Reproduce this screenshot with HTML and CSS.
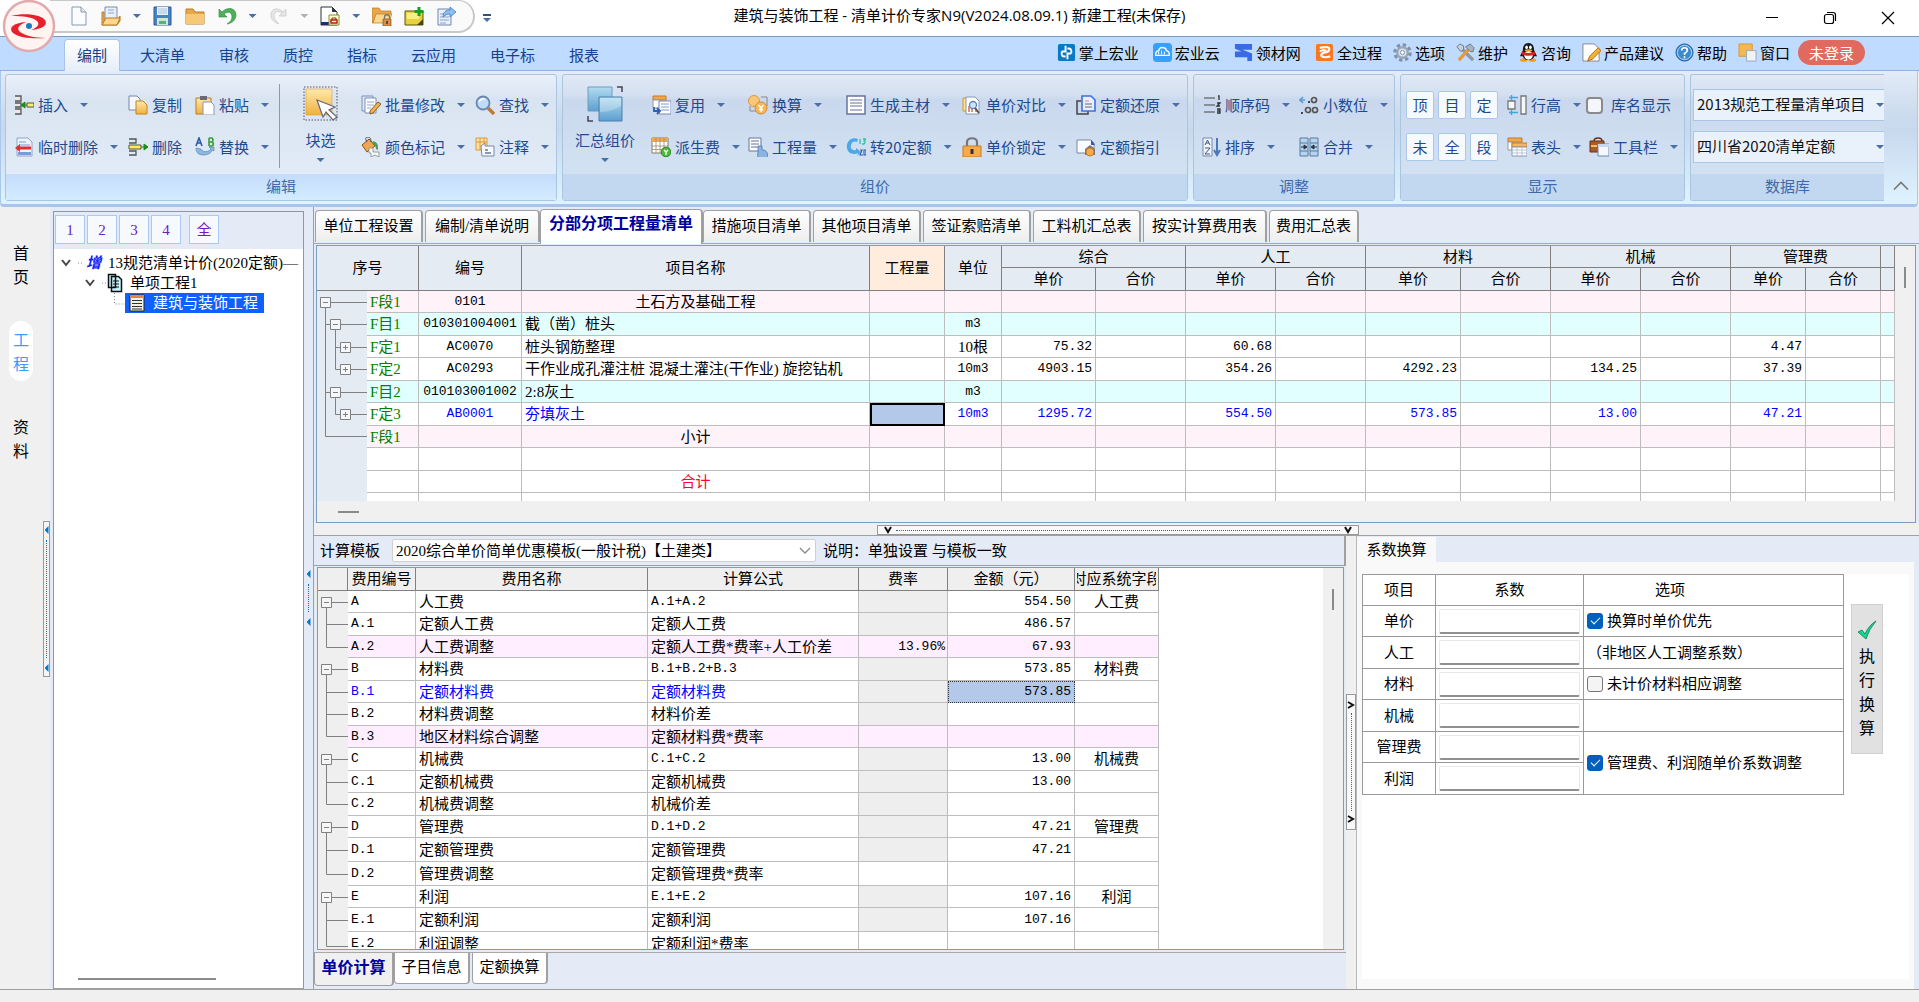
FILE: index.html
```html
<!DOCTYPE html>
<html lang="zh-CN">
<head>
<meta charset="utf-8">
<title>建筑与装饰工程 - 清单计价专家N9</title>
<link rel="stylesheet" href="styles.css">
</head>
<body>
<svg class="sprite" aria-hidden="true">
  <defs>
    <linearGradient id="gold" x1="0" y1="0" x2="0" y2="1"><stop offset="0" stop-color="#ffe9a8"/><stop offset="1" stop-color="#f0b040"/></linearGradient>
    <linearGradient id="blue" x1="0" y1="0" x2="0" y2="1"><stop offset="0" stop-color="#b4dcf0"/><stop offset="1" stop-color="#5b9fd0"/></linearGradient>
  </defs>
  <symbol id="i-new" viewBox="0 0 20 20"><path d="M3 1h9l5 5v13H3z" fill="#fafcff" stroke="#8a98b0"/><path d="M12 1v5h5" fill="#dfe8f5" stroke="#8a98b0"/></symbol>
  <symbol id="i-open" viewBox="0 0 20 20"><path d="M4 1h12v13H4z" fill="#e8f0fb" stroke="#7a8cae"/><path d="M7 4h6M7 7h6" stroke="#8fa4c8"/><path d="M1 6h2v9h13l3-5v5l-3 4H1z" fill="#f0b85a" stroke="#b87a28"/><path d="M1 19l4-7h14l-3 7z" fill="#ffd78a" stroke="#b87a28"/></symbol>
  <symbol id="i-save" viewBox="0 0 20 20"><path d="M1 1h17v18H1z" fill="#4a82c4" stroke="#2b5a96"/><path d="M4 1h11v8H4z" fill="#eaf2fb"/><path d="M5 3h9M5 5h9M5 7h9" stroke="#a9c2e0"/><path d="M4 12h11v7H4z" fill="#cfe6d0"/><path d="M6 15h7v3H6z" fill="#57b85c"/></symbol>
  <symbol id="i-folder" viewBox="0 0 20 20"><path d="M1 3h7l2 3h9v12H1z" fill="#e8a84a" stroke="#b87a28"/><path d="M1 8h18v10H1z" fill="#f6c878"/></symbol>
  <symbol id="i-undo" viewBox="0 0 20 20"><path d="M2 3v8h8L7 8c4-3 8-2 8 3 0 3-2 5-5 7 6-1 9-5 9-9 0-7-8-9-14-3z" fill="#4faf5a" stroke="#2d8a3c" stroke-width=".6"/></symbol>
  <symbol id="i-redo" viewBox="0 0 20 20"><path d="M18 3v7h-7l3-3c-4-3-8-1-8 3 0 3 2 5 5 8-6-2-8-5-8-9 0-7 7-8 12-3z" fill="#e6e6e6" stroke="#c4c4c4" stroke-width=".7"/></symbol>
  <symbol id="i-doclock" viewBox="0 0 20 20"><path d="M1 1h11l5 5v13H1z" fill="#fff" stroke="#333"/><path d="M12 1v5h5z" fill="#334"/><path d="M1 16h8v3H1z" fill="#1b2f7a"/><path d="M9 9h10v10H9z" fill="#ffffc8" stroke="#8a8a30"/><path d="M11 14h6v3h-6z" fill="none" stroke="#b01818" stroke-width="1.4"/><path d="M12 14v-2h4v2" fill="none" stroke="#b01818"/></symbol>
  <symbol id="i-folderlock" viewBox="0 0 20 20"><path d="M0 2h7l2 3h10v4H4L1 17H0z" fill="#e8a84a" stroke="#b87a28" stroke-width=".7"/><path d="M4 8h16l-4 9H1z" fill="#ffd78a" stroke="#b87a28" stroke-width=".7"/><path d="M11 13h8v7h-8z" fill="#d89048" stroke="#80501c" stroke-width=".7"/><path d="M12.500 13v-2c0-3 5-3 5 0v2" fill="none" stroke="#777" stroke-width="1.300"/><path d="M15 15v3" stroke="#333" stroke-width="1.500"/></symbol>
  <symbol id="i-addnote" viewBox="0 0 20 20"><path d="M1 5h18v14H1z" fill="#e6d23c" stroke="#5c5410"/><path d="M3 7h12v6H3z" fill="#f7ee88"/><path d="M13 19l6-6v6z" fill="#4a4410"/><path d="M15 1v9M10.500 5.500h9" stroke="#1f9c1f" stroke-width="3"/></symbol>
  <symbol id="i-share" viewBox="0 0 20 20"><path d="M2 3h13v16H2z" fill="#eaf1fb" stroke="#6f86b0"/><path d="M4 8h5M4 11h9M4 14h9M4 17h6" stroke="#8aa0c4"/><path d="M7 11c0-5 3-7 7-7V1l6 5-6 5V8c-3 0-5 1-7 3z" fill="#8cc0ee" stroke="#3f7cbc" stroke-width=".8"/></symbol>
  <symbol id="i-insert" viewBox="0 0 20 20"><path d="M1 1h6v5H1M1 8h6v4H1M1 19h6v-5H1" fill="#e8e8e8" stroke="#555" stroke-width="1.300"/><path d="M8 10h5M11 7l-4 3 4 3z" stroke="#1a8a1a" fill="#1a8a1a"/><path d="M13 8h7v4h-7z" fill="#ffee66" stroke="#554"/></symbol>
  <symbol id="i-copy" viewBox="0 0 20 20"><path d="M1 1h8l3 3v11H1z" fill="#f4f7fc" stroke="#7688a8"/><path d="M8 6h7l4 4v9H8z" fill="url(#gold)" stroke="#c08420"/></symbol>
  <symbol id="i-paste" viewBox="0 0 20 20"><path d="M1 3h15v16H1z" fill="url(#gold)" stroke="#b87a28"/><path d="M5 1h7v4H5z" fill="#6a6a70"/><path d="M8 7h8l3 3v10H8z" fill="#fff" stroke="#8a98b0"/></symbol>
  <symbol id="i-tempdel" viewBox="0 0 20 20"><path d="M3 1h11l4 4v14H3z" fill="#eef4fd" stroke="#8fa4c8"/><path d="M5 5h7M5 8h11" stroke="#7a9ad8"/><path d="M4 15h13v3H4z" fill="#7a9ad8"/><path d="M1 11l5-4v2.500h11v3H6V15z" fill="#e03030"/></symbol>
  <symbol id="i-delete" viewBox="0 0 20 20"><path d="M1 2h7v4H1M1 14h7v4H1" fill="none" stroke="#555" stroke-width="1.300"/><path d="M1 8h12v4H1z" fill="#ffee55" stroke="#554"/><path d="M13 10h4M16 7l4 3-4 3z" stroke="#1a8a1a" fill="#1a8a1a"/></symbol>
  <symbol id="i-replace" viewBox="0 0 20 20"><path d="M1 9l3-8 3 8M2 6h4" fill="none" stroke="#2a5aa8" stroke-width="1.600"/><path d="M14 1v8M14 1h3q2 2 0 4h-3h3q3 2 0 4h-3" fill="none" stroke="#3a9a3a" stroke-width="1.600"/><path d="M1 11c0 5 3 7 7 7s8-1 9-5l2 1v-4h-5l2 2c-2 3-8 4-10 0z" fill="#8cb8e0" stroke="#5080b0" stroke-width=".6"/></symbol>
  <symbol id="i-block" viewBox="0 0 36 36"><path d="M1 1h33v33H1z" fill="none" stroke="#555" stroke-dasharray="1.500 1.500"/><path d="M3 3h26v26H3z" fill="url(#gold)" stroke="#d8a040" stroke-width=".6"/><path d="M14 14l6 17 3-5 7 8 4-3-8-7 6-3z" fill="#fff" stroke="#667" stroke-width="1.200"/></symbol>
  <symbol id="i-batch" viewBox="0 0 20 20"><path d="M1 1h11v15H1z" fill="#dfe6f4" stroke="#7f8fb8"/><path d="M4 3h11v15H4z" fill="#fbfcff" stroke="#7f8fb8"/><path d="M6 7h7M6 10h7M6 13h4" stroke="#9aa8c8"/><path d="M17 7l3 2-8 9-3 1 0-3z" fill="#f2b24c" stroke="#8a5a20"/></symbol>
  <symbol id="i-find" viewBox="0 0 20 20"><path d="M13 13l6 6" stroke="#c07a38" stroke-width="3.500"/><circle cx="8" cy="8" r="6.500" fill="#bcdcf8" stroke="#6a86b0" stroke-width="1.800"/><path d="M4 7q2-4 6-3" stroke="#fff" stroke-width="1.500" fill="none"/></symbol>
  <symbol id="i-color" viewBox="0 0 20 20"><path d="M1 8l7-6 6 7-8 6z" fill="#f0a850" stroke="#8a5020"/><path d="M6 5q-3-5 1-5 3 0 3 5" fill="none" stroke="#555"/><path d="M12 4q6 1 5 9l-2-1q0-4-4-6z" fill="#4aa050"/><path d="M8 11h4v4h6v5l-4-2-4 2v-4H8z" fill="#f8f8f8" stroke="#888" stroke-width=".8"/></symbol>
  <symbol id="i-comment" viewBox="0 0 20 20"><path d="M1 1h11v12H1z" fill="#ffe2a0" stroke="#d89a3c"/><path d="M1 5h11M5 1v12M9 1v5" stroke="#d89a3c"/><path d="M6 9l4-3v3h9v10H7z" fill="#f6f9ff" stroke="#7688a8"/><path d="M10 13h3M10 16h6" stroke="#667a9c" stroke-width="1.500"/></symbol>
  <symbol id="i-sum" viewBox="0 0 36 36"><path d="M1 1h24v24H1z" fill="url(#blue)" stroke="#6a9cc0"/><path d="M12 11h23v24H12z" fill="url(#blue)" stroke="#4a80b0"/><path d="M13 12h21v8q-10 6-21 6z" fill="#fff" opacity=".25"/><path d="M30 1h5v5M1 30v5h5" fill="none" stroke="#445" stroke-width="1.500"/></symbol>
  <symbol id="i-reuse" viewBox="0 0 20 20"><path d="M2 1h13v4H2z" fill="#f0a850" stroke="#c07a28"/><path d="M2 5h7v8H2z" fill="#fff" stroke="#8a98b0"/><path d="M8 6h12v13H8z" fill="#fff" stroke="#7688b8"/><path d="M10 9h8M10 12h8M10 15h8" stroke="#7a9ad0"/><path d="M3 12v4h5M6 13l3 3-3 3" fill="none" stroke="#2f5fb0" stroke-width="1.800"/></symbol>
  <symbol id="i-convert" viewBox="0 0 20 20"><path d="M13 2h6v9" fill="none" stroke="#888"/><circle cx="6" cy="6" r="5.500" fill="#f8c878" stroke="#e0983c"/><path d="M2 11v5h6" fill="none" stroke="#888"/><circle cx="13" cy="13" r="6" fill="#f5b95c" stroke="#d88a2c"/><path d="M10.500 10l2.500 3 2.500-3M13 13v4M11 14.500h4" fill="none" stroke="#fff" stroke-width="1.300"/></symbol>
  <symbol id="i-list" viewBox="0 0 20 20"><path d="M1 1h18v18H1z" fill="#fdfdff" stroke="#66759c" stroke-width="1.500"/><path d="M4 5h12M4 8h12M4 11h12M4 15h12" stroke="#66759c"/></symbol>
  <symbol id="i-compare" viewBox="0 0 20 20"><path d="M1 3h4v13H1z" fill="#ffe08a" stroke="#c89a38"/><path d="M4 2h9l4 4v13H4z" fill="#fff" stroke="#8a98b0"/><path d="M7 17v-6M10 17v-9M14 17v-4" stroke="#d07050" stroke-width="1.500"/><circle cx="11" cy="10" r="3.500" fill="#cfe6fa" stroke="#5a86c0" stroke-width="1.300"/><path d="M13 13l4 5" stroke="#555" stroke-width="2"/></symbol>
  <symbol id="i-restore" viewBox="0 0 20 20"><path d="M5 6H1v13h11v-3" fill="none" stroke="#444" stroke-width="1.500"/><path d="M6 1h9l4 4v11H6z" fill="#e8f0ff" stroke="#3f6fe0" stroke-width="1.600"/><path d="M9 6h4" stroke="#e08080"/><path d="M9 9h7M9 12h7" stroke="#666"/></symbol>
  <symbol id="i-derive" viewBox="0 0 20 20"><path d="M1 1h16v15H1z" fill="#fff" stroke="#8a7a60"/><path d="M1 1h16v4H1z" fill="#f0a850"/><path d="M1 9h16M1 12.500h16M5 1v15M9 1v15M13 1v15" stroke="#9a8a70" stroke-width=".8"/><circle cx="15" cy="15" r="4.800" fill="#4fb838" stroke="#2d8a20"/><path d="M13 13l2 2 2-2M15 15v3" stroke="#fff" fill="none" stroke-width="1.300"/></symbol>
  <symbol id="i-qty" viewBox="0 0 20 20"><path d="M1 1h12v13H1z" fill="#fbfcff" stroke="#66759c"/><path d="M3 4h8M3 7h8M3 10h8" stroke="#66759c"/><path d="M10 9h4v4a5 5 0 1 1-4 3z" fill="#8cb4e0" stroke="#4a78b8" stroke-width=".8"/></symbol>
  <symbol id="i-to20" viewBox="0 0 20 20"><path d="M12 2C4-1 0 6 1 11c1 6 7 7 11 5l-1 3 4-4-5-4v2c-4 1-6-2-5-5 1-4 4-4 6-3z" fill="#4aa8e8"/><path d="M14 2v5M17 2h3l-2 2q2 1 0 3h-2" stroke="#2ac4a4" fill="none" stroke-width="1.300"/><path d="M14 13h2l-2 5h3M18 13h2v5h-2z" stroke="#2a5aa8" fill="none" stroke-width="1.100"/></symbol>
  <symbol id="i-lock" viewBox="0 0 20 20"><path d="M5 9V5c0-5 10-5 10 0v4" fill="none" stroke="#777" stroke-width="2.200"/><path d="M1 9h18v11H1z" fill="#f5ac48" stroke="#c87a20"/><path d="M10 12v5" stroke="#333" stroke-width="3"/></symbol>
  <symbol id="i-guide" viewBox="0 0 20 20"><path d="M1 3h14l3 3v10H1z" fill="#fbfcff" stroke="#7688a8"/><path d="M15 3v5h4z" fill="#3355aa"/><path d="M9 12l5-4 5 4v6H9z" fill="#777"/><circle cx="14" cy="15" r="4" fill="#f5ac48" stroke="#c87a20"/></symbol>
  <symbol id="i-order" viewBox="0 0 20 20"><path d="M3 3h11M3 10h11M3 17h11" stroke="#444"/><path d="M17 1h1v4M16 8h3l-3 3h3M16 14h3v4h-3M16 16h3" fill="none" stroke="#333" stroke-width="1.300"/></symbol>
  <symbol id="i-decimal" viewBox="0 0 20 20"><path d="M1 5h5M4 2L1 5l3 3" stroke="#5a9ad8" fill="none" stroke-width="1.600"/><path d="M9 7h2M2 18h2" stroke="#444" stroke-width="1.800"/><circle cx="15" cy="5" r="2.500" fill="none" stroke="#555" stroke-width="1.700"/><circle cx="9" cy="15" r="2.500" fill="none" stroke="#555" stroke-width="1.700"/><circle cx="16" cy="15" r="2.500" fill="none" stroke="#555" stroke-width="1.700"/></symbol>
  <symbol id="i-sort" viewBox="0 0 20 20"><path d="M2 1h9v18H2z" fill="#f0f4fa" stroke="#7688a8"/><path d="M4 8l2.500-5L9 8M5 6h3M4 11h5l-5 6h5" fill="none" stroke="#3a5a90"/><path d="M16 1v16M13 13l3 5 3-5" fill="none" stroke="#4a78b8" stroke-width="2"/></symbol>
  <symbol id="i-merge" viewBox="0 0 20 20"><path d="M1 1h8v18H1zM11 1h8v18h-8z" fill="#b4d4f0" stroke="#5a7a9c"/><path d="M1 6h8M1 14h8M11 6h8M11 14h8" stroke="#5a7a9c"/><path d="M2 10h5M5 8l3 2-3 2zM18 10h-5M15 8l-3 2 3 2z" stroke="#334" fill="#334"/></symbol>
  <symbol id="i-rowh" viewBox="0 0 20 20"><path d="M1 6h7v8H1zM14 1h5v18h-5z" fill="#f4f8fc" stroke="#777" stroke-width="1.300"/><path d="M4.500 0v5M2 2.500h9M4.500 15v5M2 17.500h9" stroke="#38a8e0" stroke-width="1.400"/></symbol>
  <symbol id="i-thead" viewBox="0 0 20 20"><path d="M1 1h14v4H1z" fill="#f0a850" stroke="#c07a28"/><path d="M1 5h4v8H1z" fill="#fff" stroke="#999"/><path d="M5 6h15v4H5z" fill="#f5b860" stroke="#c07a28"/><path d="M5 10h15v9H5z" fill="#fff" stroke="#8a98b0"/><path d="M5 13h15M5 16h15M10 10v9M15 10v9" stroke="#a8b8d0" stroke-width=".8"/></symbol>
  <symbol id="i-tools" viewBox="0 0 20 20"><path d="M1 4h14v11H1z" fill="#a85a28" stroke="#6a3010"/><path d="M5 4q0-3 4-3t4 3" fill="none" stroke="#6a3010" stroke-width="1.500"/><path d="M2 9h6" stroke="#f0c060" stroke-width="2"/><path d="M9 7h11v12H9z" fill="#f4f8fd" stroke="#6f86b0"/><path d="M9 7h11v3H9z" fill="#c8d8f0"/></symbol>
  <symbol id="i-app1" viewBox="0 0 20 20"><rect x="1" y="1" width="18" height="18" rx="2" fill="#0878c8"/><path d="M9 3v6H5M5 9q-1 6 4 5M11 17v-6h4M15 11q1-6-4-5" fill="none" stroke="#fff" stroke-width="2"/></symbol>
  <symbol id="i-app2" viewBox="0 0 20 20"><rect width="20" height="20" rx="4" fill="#38a0f8"/><path d="M3 13q-1-4 3-5 1-4 5-3 3 0 3 3 4 1 3 5z" fill="none" stroke="#fff" stroke-width="1.500"/><path d="M6 9v3M9 8v4M12 9v3" stroke="#fff"/></symbol>
  <symbol id="i-app3" viewBox="0 0 20 20"><path d="M1 1h18v6H9l10 4v8h-5v-4H1V9h7L1 6z" fill="#3a6ce0"/></symbol>
  <symbol id="i-app4" viewBox="0 0 20 20"><rect x="1" y="1" width="18" height="18" rx="2" fill="#fa7820"/><path d="M5 5q11-2 10 2-1 3-5 3-5 2-3 4 4 2 9 0M5 9q2-2 7-1" fill="none" stroke="#fff" stroke-width="2.200"/></symbol>
  <symbol id="i-gear" viewBox="0 0 20 20"><circle cx="10" cy="10" r="8" fill="none" stroke="#8090a8" stroke-width="3.500" stroke-dasharray="3.500 2.780"/><circle cx="10" cy="10" r="5.500" fill="#dce4ee" stroke="#98a6ba" stroke-width="2.500"/><circle cx="10" cy="10" r="2.200" fill="#fff" stroke="#8090a8"/></symbol>
  <symbol id="i-fix" viewBox="0 0 20 20"><path d="M5 5l13 13" stroke="#8a98a8" stroke-width="3.500"/><path d="M1 4l3-3 4 2 0 4-3 2z" fill="#c8d0da" stroke="#6a7888"/><path d="M14 6L3 18" stroke="#e8983c" stroke-width="3.500"/><path d="M10 4l5-3 4 4-1 4-3 0z" fill="#a8b4c0" stroke="#6a7888"/></symbol>
  <symbol id="i-qq" viewBox="0 0 20 20"><ellipse cx="5" cy="18" rx="4" ry="2" fill="#f0a020"/><ellipse cx="14" cy="18" rx="4" ry="2" fill="#f0a020"/><path d="M4 8q0-8 6-8t6 8l3 6-3 0q-1 4-6 4t-6-4l-3 0z" fill="#181818"/><ellipse cx="10" cy="13" rx="4.500" ry="4.500" fill="#fff"/><path d="M3 9q7 3 14 0v3q-7 3-14 0z" fill="#e02020"/><ellipse cx="8" cy="4.500" rx="1.400" ry="2" fill="#fff"/><ellipse cx="12" cy="4.500" rx="1.400" ry="2" fill="#fff"/><ellipse cx="10" cy="7.800" rx="4" ry="1.200" fill="#f0a020"/></symbol>
  <symbol id="i-suggest" viewBox="0 0 20 20"><path d="M1 1h12l5 5v13H1z" fill="#fff" stroke="#888"/><path d="M17 5l3 3-9 9-5 2 2-5z" fill="#f8b030" stroke="#a87018"/></symbol>
  <symbol id="i-help" viewBox="0 0 20 20"><circle cx="10" cy="10" r="9" fill="#3a8ad0" stroke="#205a98"/><circle cx="10" cy="10" r="7.500" fill="none" stroke="#b8dcf8"/><path d="M7 8q0-3 3-3t3 2.500q0 2-3 3.500v1.500M10 14v2" fill="none" stroke="#fff" stroke-width="1.800"/></symbol>
  <symbol id="i-window" viewBox="0 0 20 20"><path d="M1 1h14v13H1z" fill="#f5b84c" stroke="#d89a38"/><path d="M9 8h10v11H9z" fill="#eef3fa" stroke="#98a8c0"/></symbol>
</svg>

<header class="titlebar">
  <div class="quick">
    <button aria-label="新建"><svg><use href="#i-new"/></svg></button>
    <button aria-label="打开"><svg><use href="#i-open"/></svg><i class="caret"></i></button>
    <button aria-label="保存"><svg><use href="#i-save"/></svg></button>
    <button aria-label="目录"><svg><use href="#i-folder"/></svg></button>
    <button aria-label="撤销"><svg><use href="#i-undo"/></svg><i class="caret"></i></button>
    <button aria-label="重做"><svg><use href="#i-redo"/></svg><i class="caret off"></i></button>
    <button aria-label="加密"><svg><use href="#i-doclock"/></svg><i class="caret"></i></button>
    <button aria-label="锁定目录"><svg><use href="#i-folderlock"/></svg></button>
    <button aria-label="添加"><svg><use href="#i-addnote"/></svg></button>
    <button aria-label="导出"><svg><use href="#i-share"/></svg></button>
  </div>
  <button class="quick-more" aria-label="自定义"><i class="caret"></i></button>
  <h1>建筑与装饰工程 - 清单计价专家N9(V2024.08.09.1) 新建工程(未保存)</h1>
  <div class="winbtns">
    <button aria-label="最小化"><svg viewBox="0 0 14 14"><path d="M1 6.500h12" stroke="#000"/></svg></button>
    <button aria-label="还原"><svg viewBox="0 0 14 14"><rect x="1.500" y="3.500" width="9" height="9" rx="2" fill="none" stroke="#000" stroke-width="1.200"/><path d="M4 1.500h6q2.500 0 2.500 2.500v6" fill="none" stroke="#000" stroke-width="1.200"/></svg></button>
    <button aria-label="关闭"><svg viewBox="0 0 14 14"><path d="M1 1l12 12M13 1L1 13" stroke="#000" stroke-width="1.200"/></svg></button>
  </div>
  <button class="logo" aria-label="主菜单"><svg viewBox="0 0 54 54"><circle cx="27" cy="26" r="25" fill="#fff4f2" stroke="#e3a9ac" stroke-width="2.500"/><path d="M9 16c12-3 27-2 33 3 5 5 0 10-13 11 7-3 9-6 6-9-4-4-14-5-26-5z" fill="#e8202c"/><path d="M44 38c-12 1-27 0-33-5-5-5 0-10 13-11-7 3-10 6-6 10 4 3 14 6 26 6z" fill="#e8202c"/><circle cx="27" cy="26" r="3" fill="#1c7ab8"/></svg></button>
</header>

<nav class="menurow">
  <div class="rtabs">
    <button class="on">编制</button><button>大清单</button><button>审核</button><button>质控</button><button>指标</button><button>云应用</button><button>电子标</button><button>报表</button>
  </div>
  <div class="links">
    <a href="#"><svg><use href="#i-app1"/></svg>掌上宏业</a>
    <a href="#"><svg><use href="#i-app2"/></svg>宏业云</a>
    <a href="#"><svg><use href="#i-app3"/></svg>领材网</a>
    <a href="#"><svg><use href="#i-app4"/></svg>全过程</a>
    <a href="#"><svg><use href="#i-gear"/></svg>选项</a>
    <a href="#"><svg><use href="#i-fix"/></svg>维护</a>
    <a href="#"><svg><use href="#i-qq"/></svg>咨询</a>
    <a href="#"><svg><use href="#i-suggest"/></svg>产品建议</a>
    <a href="#"><svg><use href="#i-help"/></svg>帮助</a>
    <a href="#"><svg><use href="#i-window"/></svg>窗口</a>
    <button class="login">未登录</button>
  </div>
</nav>

<div class="ribbon">
  <section class="group hot g-edit">
    <div class="body">
      <div class="cmds">
        <button><svg><use href="#i-insert"/></svg>插入<i class="caret"></i></button>
        <button><svg><use href="#i-copy"/></svg>复制</button>
        <button><svg><use href="#i-paste"/></svg>粘贴<i class="caret"></i></button>
        <button><svg><use href="#i-tempdel"/></svg>临时删除<i class="caret"></i></button>
        <button><svg><use href="#i-delete"/></svg>删除</button>
        <button><svg><use href="#i-replace"/></svg>替换<i class="caret"></i></button>
      </div>
      <button class="big sep"><svg><use href="#i-block"/></svg>块选<i class="caret"></i></button>
      <div class="cmds two">
        <button><svg><use href="#i-batch"/></svg>批量修改<i class="caret"></i></button>
        <button><svg><use href="#i-find"/></svg>查找<i class="caret"></i></button>
        <button><svg><use href="#i-color"/></svg>颜色标记<i class="caret"></i></button>
        <button><svg><use href="#i-comment"/></svg>注释<i class="caret"></i></button>
      </div>
    </div>
    <h2>编辑</h2>
  </section>
  <section class="group g-price">
    <div class="body">
      <button class="big"><svg><use href="#i-sum"/></svg>汇总组价<i class="caret"></i></button>
      <div class="cmds">
        <button><svg><use href="#i-reuse"/></svg>复用<i class="caret"></i></button>
        <button><svg><use href="#i-convert"/></svg>换算<i class="caret"></i></button>
        <button><svg><use href="#i-list"/></svg>生成主材<i class="caret"></i></button>
        <button><svg><use href="#i-compare"/></svg>单价对比<i class="caret"></i></button>
        <button><svg><use href="#i-restore"/></svg>定额还原<i class="caret"></i></button>
        <button><svg><use href="#i-derive"/></svg>派生费<i class="caret"></i></button>
        <button><svg><use href="#i-qty"/></svg>工程量<i class="caret"></i></button>
        <button><svg><use href="#i-to20"/></svg>转20定额<i class="caret"></i></button>
        <button><svg><use href="#i-lock"/></svg>单价锁定<i class="caret"></i></button>
        <button><svg><use href="#i-guide"/></svg>定额指引</button>
      </div>
    </div>
    <h2>组价</h2>
  </section>
  <section class="group g-adjust">
    <div class="body">
      <div class="cmds">
        <button><svg><use href="#i-order"/></svg>顺序码<i class="caret"></i></button>
        <button><svg><use href="#i-decimal"/></svg>小数位<i class="caret"></i></button>
        <button><svg><use href="#i-sort"/></svg>排序<i class="caret"></i></button>
        <button><svg><use href="#i-merge"/></svg>合并<i class="caret"></i></button>
      </div>
    </div>
    <h2>调整</h2>
  </section>
  <section class="group g-show">
    <div class="body">
      <div class="tiles"><button>顶</button><button>目</button><button>定</button><button>未</button><button>全</button><button>段</button></div>
      <div class="cmds">
        <button><svg><use href="#i-rowh"/></svg>行高<i class="caret"></i></button>
        <label><input type="checkbox">库名显示</label>
        <button><svg><use href="#i-thead"/></svg>表头<i class="caret"></i></button>
        <button class="ind"><svg><use href="#i-tools"/></svg>工具栏<i class="caret"></i></button>
      </div>
    </div>
    <h2>显示</h2>
  </section>
  <section class="group g-db">
    <div class="body">
      <div class="pick"><select aria-label="清单库"><option>2013规范工程量清单项目</option></select><i class="caret"></i></div>
      <div class="pick"><select aria-label="定额库"><option>四川省2020清单定额</option></select><i class="caret"></i></div>
    </div>
    <h2>数据库</h2>
  </section>
  <button class="fold" aria-label="收起功能区"><svg viewBox="0 0 16 10"><path d="M1 8.500L8 1.500l7 7" fill="none" stroke="#777" stroke-width="1.600"/></svg></button>
</div>

<main class="work">
  <nav class="rail">
    <a href="#">首<br>页</a><a href="#" class="on">工<br>程</a><a href="#">资<br>料</a>
    <span class="railgrip"><i></i><b></b><i></i></span>
  </nav>
  <aside class="tree">
    <div class="levels"><button>1</button><button>2</button><button>3</button><button>4</button><button class="all">全</button></div>
    <ul>
      <li><svg width="32" height="20" viewBox="0 0 32 20"><path d="M4 7l4 5 4-5" fill="none" stroke="#444" stroke-width="2"/><path d="M20 10h4" stroke="#888" stroke-dasharray="1 2"/></svg><em>增</em><span>13规范清单计价(2020定额)—</span></li>
      <li class="l2"><svg width="44" height="20" viewBox="0 0 44 20"><path d="M4 7l4 5 4-5" fill="none" stroke="#444" stroke-width="2"/><path d="M20 10h5" stroke="#888" stroke-dasharray="1 2"/><path d="M26.500 1.500h7v13h-7zM29.500 3.500h7l3 3v12h-10z" fill="#c8f4ff" stroke="#111" stroke-width="1.500"/><path d="M31 8h6M31 11h6M31 14h6" stroke="#111"/></svg><span>单项工程1</span></li>
      <li class="l3"><svg width="12" height="20" viewBox="0 0 12 20"><path d="M1.500 0v11H12" fill="none" stroke="#888" stroke-dasharray="1 2"/></svg><a href="#"><svg width="16" height="18" viewBox="0 0 16 18"><path d="M1 1h14v16H1z" fill="#f4f0e0" stroke="#222"/><path d="M1 1h14v3H1z" fill="#f08040"/><path d="M3 6.500h10M3 9.500h10M3 12.500h10M3 15h10" stroke="#333"/></svg>建筑与装饰工程</a></li>
    </ul>
    <div class="hthumb"></div>
  </aside>
  <div class="vgrip"><i></i><b></b><i></i></div>

  <section class="content">
    <div class="doctabs">
      <button>单位工程设置</button><button>编制/清单说明</button><button class="on">分部分项工程量清单</button><button>措施项目清单</button><button>其他项目清单</button><button>签证索赔清单</button><button>工料机汇总表</button><button>按实计算费用表</button><button>费用汇总表</button>
    </div>
    <div class="bill">
      <div class="billrow">
      <div class="billclip">
      <table class="grid">
        <colgroup><col class="w50"><col class="w52"><col class="w103"><col class="w348"><col class="w75"><col class="w57"><col class="w94"><col class="w90"><col class="w90"><col class="w90"><col class="w95"><col class="w90"><col class="w90"><col class="w90"><col class="w75"><col class="w75"><col></colgroup>
        <thead>
          <tr><th colspan="2" rowspan="2">序号</th><th rowspan="2">编号</th><th rowspan="2">项目名称</th><th rowspan="2" class="cur">工程量</th><th rowspan="2">单位</th><th colspan="2">综合</th><th colspan="2">人工</th><th colspan="2">材料</th><th colspan="2">机械</th><th colspan="2">管理费</th><th></th></tr>
          <tr class="low"><th>单价</th><th>合价</th><th>单价</th><th>合价</th><th>单价</th><th>合价</th><th>单价</th><th>合价</th><th>单价</th><th>合价</th><th></th></tr>
        </thead>
        <tbody>
          <tr class="pink"><td rowspan="10" class="gut"><svg width="50" height="210" viewBox="0 0 50 210"><g fill="none" stroke="#808080"><path d="M8.500 16v129.500H50M13 11.500h37M8.500 33.500H13M23 33.500h27M18.500 38v40.500H23M18.500 56.500h5M34 56.500h16M34 78.500h16M8.500 101.500H13M23 101.500h27M18.500 106v17.500H23M34 123.500h16"/><path fill="#f4f7fb" d="M3.500 6.500h10v10h-10zM13.500 28.500h10v10h-10zM23.500 51.500h10v10h-10zM23.500 73.500h10v10h-10zM13.500 96.500h10v10h-10zM23.500 118.500h10v10h-10z"/><path d="M6 11.500h5M16 33.500h5M26 56.500h5M28.500 54v5M26 78.500h5M28.500 76v5M16 101.500h5M26 123.500h5M28.500 121v5"/></g></svg></td><td class="no">F段1</td><td class="c k">0101</td><td class="c">土石方及基础工程</td><td></td><td></td><td></td><td></td><td></td><td></td><td></td><td></td><td></td><td></td><td></td><td></td><td></td></tr>
          <tr class="cyan"><td class="no">F目1</td><td class="c k">010301004001</td><td>截（凿）桩头</td><td></td><td class="c k">m3</td><td></td><td></td><td></td><td></td><td></td><td></td><td></td><td></td><td></td><td></td><td></td></tr>
          <tr><td class="no">F定1</td><td class="c k">AC0070</td><td>桩头钢筋整理</td><td></td><td class="c">10根</td><td class="r">75.32</td><td></td><td class="r">60.68</td><td></td><td></td><td></td><td></td><td></td><td class="r">4.47</td><td></td><td></td></tr>
          <tr><td class="no">F定2</td><td class="c k">AC0293</td><td>干作业成孔灌注桩 混凝土灌注(干作业) 旋挖钻机</td><td></td><td class="c k">10m3</td><td class="r">4903.15</td><td></td><td class="r">354.26</td><td></td><td class="r">4292.23</td><td></td><td class="r">134.25</td><td></td><td class="r">37.39</td><td></td><td></td></tr>
          <tr class="cyan"><td class="no">F目2</td><td class="c k">010103001002</td><td>2:8灰土</td><td></td><td class="c k">m3</td><td></td><td></td><td></td><td></td><td></td><td></td><td></td><td></td><td></td><td></td><td></td></tr>
          <tr class="sel"><td class="no">F定3</td><td class="c k">AB0001</td><td>夯填灰土</td><td class="active"></td><td class="c k">10m3</td><td class="r">1295.72</td><td></td><td class="r">554.50</td><td></td><td class="r">573.85</td><td></td><td class="r">13.00</td><td></td><td class="r">47.21</td><td></td><td></td></tr>
          <tr class="pink"><td class="no">F段1</td><td></td><td class="c">小计</td><td></td><td></td><td></td><td></td><td></td><td></td><td></td><td></td><td></td><td></td><td></td><td></td><td></td></tr>
          <tr><td></td><td></td><td></td><td></td><td></td><td></td><td></td><td></td><td></td><td></td><td></td><td></td><td></td><td></td><td></td><td></td></tr>
          <tr><td></td><td></td><td class="c total">合计</td><td></td><td></td><td></td><td></td><td></td><td></td><td></td><td></td><td></td><td></td><td></td><td></td><td></td></tr>
          <tr class="cut"><td></td><td></td><td></td><td></td><td></td><td></td><td></td><td></td><td></td><td></td><td></td><td></td><td></td><td></td><td></td><td></td></tr>
        </tbody>
      </table>
      </div>
      <div class="vbar"><i></i></div>
      </div>
      <div class="hbar"><i></i></div>
    </div>
    <div class="hgrip"><div><svg viewBox="0 0 8 8"><path d="M1 1l3 5 3-5" fill="none" stroke="#111" stroke-width="2"/></svg><b></b><svg viewBox="0 0 8 8"><path d="M1 1l3 5 3-5" fill="none" stroke="#111" stroke-width="2"/></svg></div></div>

    <div class="lower">
      <section class="calc">
        <div class="tpl">
          <label for="tpl">计算模板</label>
          <div class="tplpick"><select id="tpl"><option>2020综合单价简单优惠模板(一般计税)【土建类】</option></select><svg viewBox="0 0 12 8"><path d="M1 1l5 5 5-5" fill="none" stroke="#888" stroke-width="1.300"/></svg></div>
          <span>说明：单独设置 与模板一致</span>
        </div>
        <div class="calcbox">
          <table class="grid fee">
            <colgroup><col class="w30"><col class="w68"><col class="w232"><col class="w211"><col class="w89"><col class="w127"><col class="w84"></colgroup>
            <thead><tr class="low"><th></th><th>费用编号</th><th>费用名称</th><th>计算公式</th><th>费率</th><th>金额（元）</th><th><div class="clip"><span>对应系统字段</span></div></th></tr></thead>
            <tbody>
              <tr><td rowspan="16" class="gut"><svg width="30" height="360" viewBox="0 0 30 360"><g fill="none" stroke="#808080"><path d="M8.500 16v40.500H30M13 11.500h17M8.500 33.500H30M8.500 84v61.500H30M13 78.500h17M8.500 101.500H30M8.500 123.500H30M8.500 173v40.500H30M13 168.500h17M8.500 191.500H30M8.500 241v42.500H30M13 236.500h17M8.500 259.500H30M8.500 312v43.500H30M13 306.500h17M8.500 329.500H30"/><path fill="#f6f6f6" d="M3.500 6.500h10v10h-10zM3.500 73.500h10v10h-10zM3.500 163.500h10v10h-10zM3.500 231.500h10v10h-10zM3.500 301.500h10v10h-10z"/><path d="M6 11.500h5M6 78.500h5M6 168.500h5M6 236.500h5M6 306.500h5"/></g></svg></td><td class="k">A</td><td>人工费</td><td class="k">A.1+A.2</td><td class="g"></td><td class="r">554.50</td><td class="c">人工费</td></tr>
              <tr><td class="k">A.1</td><td>定额人工费</td><td>定额人工费</td><td class="g"></td><td class="r">486.57</td><td></td></tr>
              <tr class="rose"><td class="k">A.2</td><td>人工费调整</td><td>定额人工费*费率+人工价差</td><td class="r tight">13.96%</td><td class="r">67.93</td><td></td></tr>
              <tr><td class="k">B</td><td>材料费</td><td class="k">B.1+B.2+B.3</td><td class="g"></td><td class="r">573.85</td><td class="c">材料费</td></tr>
              <tr class="sel"><td class="k">B.1</td><td>定额材料费</td><td>定额材料费</td><td class="g"></td><td class="r focus">573.85</td><td></td></tr>
              <tr><td class="k">B.2</td><td>材料费调整</td><td>材料价差</td><td class="g"></td><td></td><td></td></tr>
              <tr class="rose"><td class="k">B.3</td><td>地区材料综合调整</td><td>定额材料费*费率</td><td></td><td></td><td></td></tr>
              <tr><td class="k">C</td><td>机械费</td><td class="k">C.1+C.2</td><td class="g"></td><td class="r">13.00</td><td class="c">机械费</td></tr>
              <tr><td class="k">C.1</td><td>定额机械费</td><td>定额机械费</td><td class="g"></td><td class="r">13.00</td><td></td></tr>
              <tr><td class="k">C.2</td><td>机械费调整</td><td>机械价差</td><td class="g"></td><td></td><td></td></tr>
              <tr><td class="k">D</td><td>管理费</td><td class="k">D.1+D.2</td><td class="g"></td><td class="r">47.21</td><td class="c">管理费</td></tr>
              <tr class="tall"><td class="k">D.1</td><td>定额管理费</td><td>定额管理费</td><td class="g"></td><td class="r">47.21</td><td></td></tr>
              <tr class="tall"><td class="k">D.2</td><td>管理费调整</td><td>定额管理费*费率</td><td></td><td></td><td></td></tr>
              <tr><td class="k">E</td><td>利润</td><td class="k">E.1+E.2</td><td class="g"></td><td class="r">107.16</td><td class="c">利润</td></tr>
              <tr class="tall"><td class="k">E.1</td><td>定额利润</td><td>定额利润</td><td class="g"></td><td class="r">107.16</td><td></td></tr>
              <tr class="tall"><td class="k">E.2</td><td>利润调整</td><td>定额利润*费率</td><td></td><td></td><td></td></tr>
            </tbody>
          </table>
          <div class="vbar"><i></i></div>
        </div>
        <div class="subtabs"><button class="on">单价计算</button><button>子目信息</button><button>定额换算</button></div>
      </section>
      <div class="midgrip"><div><svg viewBox="0 0 8 8"><path d="M1 1l5 3-5 3" fill="none" stroke="#111" stroke-width="2"/></svg><b></b><svg viewBox="0 0 8 8"><path d="M1 1l5 3-5 3" fill="none" stroke="#111" stroke-width="2"/></svg></div></div>
      <section class="coef">
        <div class="coeftabs"><button>系数换算</button></div>
        <div class="coefpane">
          <table>
            <colgroup><col class="w73"><col class="w148"><col class="w260"></colgroup>
            <thead><tr><th>项目</th><th>系数</th><th class="opthead">选项</th></tr></thead>
            <tbody>
              <tr><th><label for="k1">单价</label></th><td><input type="text" id="k1"></td><td class="opt"><label><input type="checkbox" checked>换算时单价优先</label></td></tr>
              <tr><th><label for="k2">人工</label></th><td><input type="text" id="k2"></td><td class="opt">（非地区人工调整系数）</td></tr>
              <tr><th><label for="k3">材料</label></th><td><input type="text" id="k3"></td><td class="opt"><label><input type="checkbox">未计价材料相应调整</label></td></tr>
              <tr><th><label for="k4">机械</label></th><td><input type="text" id="k4"></td><td></td></tr>
              <tr><th><label for="k5">管理费</label></th><td><input type="text" id="k5"></td><td rowspan="2" class="opt"><label><input type="checkbox" checked>管理费、利润随单价系数调整</label></td></tr>
              <tr><th><label for="k6">利润</label></th><td><input type="text" id="k6"></td></tr>
            </tbody>
          </table>
          <button class="run"><svg viewBox="0 0 20 20"><path d="M1 12l4-2 3 4Q12 5 19 1 12 9 9 19z" fill="#10d890" stroke="#077a50" stroke-width=".8"/></svg>执<br>行<br>换<br>算</button>
        </div>
      </section>
    </div>
  </section>
</main>
<footer class="status"></footer>
</body>
</html>
```
FILE: styles.css
```css
* { box-sizing: border-box; }
html, body { height: 100%; }
body {
  margin: 0;
  display: flex;
  flex-direction: column;
  overflow: hidden;
  background: #f0f0f0;
  color: #000;
  font: 15px/20px "Noto Sans CJK SC", sans-serif;
}
button, select, input {
  margin: 0;
  padding: 0;
  border: 0;
  background: none;
  color: inherit;
  font: inherit;
}
a { color: inherit; text-decoration: none; }
h1, h2, ul { margin: 0; padding: 0; font-weight: 400; font-size: 15px; list-style: none; }
svg { display: block; flex: none; }
.sprite { position: absolute; width: 0; height: 0; }
.caret {
  flex: none;
  width: 8px;
  height: 4px;
  background: #4a6fa8;
  clip-path: polygon(0 0, 100% 0, 50% 100%);
}
.caret.off { background: #b0b0b0; }

/* title bar */
.titlebar {
  position: relative;
  display: grid;
  grid-template-columns: 475px 1fr auto 1fr;
  align-items: center;
  height: 37px;
  background: #fff;
  border-bottom: 1px solid #7d97bd;
}
.quick {
  align-self: start;
  display: flex;
  align-items: center;
  justify-content: space-between;
  height: 33px;
  margin-left: 50px;
  padding: 0 17px 0 19px;
  border: 2px solid #c8c8c8;
  border-width: 1px 2px 2px 0;
  border-radius: 0 17px 17px 0;
  background: #fafafa;
}
.quick button { display: flex; align-items: center; gap: 12px; }
.quick svg { width: 20px; height: 20px; }
.quick-more { padding: 4px 8px; justify-self: start; }
.quick-more .caret { display: block; }
.quick-more::before { content: ""; display: block; width: 8px; height: 2px; margin-bottom: 2px; background: #33507a; }
.titlebar h1 { position: absolute; left: 0; right: 0; top: 5px; text-align: center; pointer-events: none; font-family: "Open Sans", "Noto Sans CJK SC", sans-serif; }
.winbtns { grid-column: 4; justify-self: end; display: flex; padding-right: 2px; }
.winbtns button { display: grid; place-items: center; width: 58px; height: 34px; }
.winbtns svg { width: 14px; height: 14px; }
.logo { position: absolute; left: 2px; top: 0; z-index: 2; }
.logo svg { width: 54px; height: 54px; }

/* tab row */
.menurow {
  display: flex;
  justify-content: space-between;
  align-items: flex-end;
  height: 34px;
  padding-left: 64px;
  background: #bfdbff;
  border-bottom: 1px solid #8db2e3;
}
.rtabs { display: flex; gap: 6px; margin-bottom: -1px; }
.rtabs button { height: 32px; padding: 0 13px 2px; color: #15428b; border: 1px solid transparent; border-bottom: 0; }
.rtabs .on { padding: 0 12px 2px; }
.rtabs .on { background: linear-gradient(#fff, #e6eef8); border-color: #a8c4e8; border-radius: 4px 4px 0 0; }
.links { display: flex; align-items: center; align-self: center; gap: 11px; padding-right: 54px; margin-top: -2px; }
.links a { display: flex; align-items: center; gap: 3px; }
.links a:nth-child(-n+3) { margin-right: 3px; }
.links svg { width: 19px; height: 19px; }
.login { height: 25px; padding: 0 11px; margin-left: -3px; border-radius: 13px; background: #e06a5f; color: #fff; }

/* ribbon */
.ribbon {
  display: flex;
  align-items: stretch;
  gap: 5px;
  padding: 3px 0 3px 4px;
  margin-right: 1px;
  border: 1px solid #a9c9ec;
  border-top: 0;
  border-bottom: 3px solid #a8c4ec;
  border-radius: 0 0 4px 4px;
  background: linear-gradient(#e3ecf8, #cddcee 30%, #c8d9ee 45%, #dff3ff);
  color: #1e4a8e;
}
.group {
  display: flex;
  flex-direction: column;
  flex: none;
  height: 127px;
  border: 1px solid #a9c6e0;
  border-radius: 3px;
  background: linear-gradient(#e0e9f4, #d4e0f0 16%, #c9d8ed 20%, #d6e5f4);
}
.group.hot { background: linear-gradient(#e9f0f9, #dce6f3 16%, #d9e4f1 20%, #e5eef9); }
.group .body { flex: 1; display: flex; padding-top: 9px; }
.group h2 { height: 26px; line-height: 24px; text-align: center; background: #c1d8f0; color: #3e6aaa; }
.group.hot h2 { background: linear-gradient(#c4dcfb, #d4ecff); }
.cmds { display: grid; grid-auto-rows: 42px; align-content: start; }
.cmds button { display: flex; align-items: center; gap: 4px; white-space: nowrap; }
.cmds svg { width: 20px; height: 20px; }
.cmds .caret { margin-left: 8px; }
.cmds label { display: flex; align-items: center; gap: 8px; }
.cmds input { appearance: none; width: 17px; height: 17px; border: 2px solid #8a8a8a; border-radius: 4px; background: #f4f6f9; }
.big { display: flex; flex-direction: column; align-items: center; width: 82px; height: 84px; padding-top: 2px; }
.big svg { width: 36px; height: 36px; margin-bottom: 8px; }
.big .caret { margin-top: 8px; }
.big.sep { border-left: 1px solid #8c9aac; }
.g-edit { width: 552px; }
.g-edit .cmds { grid-template-columns: 114px 67px 84px; padding-left: 8px; }
.g-edit .cmds.two { grid-template-columns: 114px 80px; padding-left: 0; }
.g-price { width: 626px; }
.g-price .big { width: 84px; margin-right: 4px; }
.g-price .cmds { grid-template-columns: 97px 98px 116px 114px 110px; }
.g-adjust { width: 202px; }
.g-adjust .cmds { grid-template-columns: 98px 95px; padding-left: 7px; }
.g-show { width: 285px; }
.g-show .cmds { grid-template-columns: 79px 98px; padding-left: 9px; }
.g-show .ind { padding-left: 3px; }
.tiles { display: grid; grid-template-columns: repeat(3, 28px); gap: 14px 4px; align-content: start; padding: 7px 0 0 5px; }
.tiles button { height: 28px; background: #f6faff; border: 1px solid #aac8ec; border-radius: 2px; }
.g-db { flex: 1; margin-right: -5px; border-right: 0; border-radius: 3px 0 0 3px; }
.group.g-db .body { flex-direction: column; gap: 10px; padding: 14px 0 0 2px; }
.pick { display: flex; align-items: center; height: 32px; border: 1px solid #a9c6e8; border-right: 0; background: #e9f1fb; color: #111; }
.pick select { flex: 1; min-width: 0; height: 28px; padding: 0 0 2px 3px; appearance: none; }
.fold { flex: none; width: 33px; margin-bottom: 10px; display: grid; place-items: end center; }
.fold svg { width: 16px; height: 10px; }

/* work area */
.work { flex: 1; min-height: 0; display: flex; background: #e4ebf7; }
.tree, .content { font-family: "Liberation Serif", "Noto Sans CJK SC", serif; }
.rail { position: relative; flex: none; width: 50px; padding: 27px 0 0 9px; background: #f0f0f0; font-size: 16px; line-height: 24px; text-align: center; }
.rail a { display: block; width: 24px; padding: 6px 0; margin-bottom: 27px; border-radius: 12px; }
.rail .on { background: #fff; color: #3d9bff; }
.railgrip { position: absolute; left: 43px; top: 314px; width: 7px; height: 156px; border: 1px solid #999; background: #f4f4f4; }
.railgrip, .vgrip { display: flex; flex-direction: column; align-items: center; justify-content: space-between; }
.railgrip { padding: 4px 0; }
.railgrip i, .vgrip i { width: 4px; height: 8px; background: #0078d0; clip-path: polygon(100% 0, 100% 100%, 0 50%); }
.railgrip b, .vgrip b { flex: 1; margin: 6px 0; border-left: 1px dotted #0078d0; }
.tree { flex: none; display: flex; flex-direction: column; width: 251px; margin: 4px 0 0 3px; border: 1px solid #8a99a8; border-bottom-color: #a0a0a0; background: #fff; }
.levels { display: flex; gap: 2px; padding: 3px 1px 5px; background: #e4ebf7; }
.levels button { width: 30px; height: 29px; border: 1px solid #a9c9ee; background: #f6faff; color: #6a1fc0; }
.levels .all { margin-left: 6px; }
.tree ul { padding: 4px 0; }
.tree li { display: flex; align-items: center; height: 20px; padding-left: 4px; overflow: hidden; white-space: nowrap; }
.tree em { width: 18px; margin: 0 4px 0 -4px; color: #1020ff; font-weight: 700; }
.tree .l2 { padding-left: 28px; gap: 4px; }
.tree .l3 { padding-left: 59px; }
.tree .l3 a { display: flex; align-items: center; gap: 8px; height: 20px; padding: 0 6px 0 4px; background: #1060ff; color: #fff; }
.hthumb { width: 138px; height: 2px; margin: auto 0 8px 24px; background: #8a8a8a; }
.vgrip { flex: none; width: 9px; height: 56px; margin: 363px 0 0; }
.content { flex: 1; min-width: 0; display: flex; flex-direction: column; border-left: 1px solid #a0a0a0; }
.doctabs { display: grid; grid-template-columns: 110px 117px 161px 110px 110px 110px 110px 126px 92px; align-items: end; height: 37px; padding: 0 0 1px 1px; border-bottom: 1px solid #a8a8a8; }
.doctabs button { height: 32px; margin-right: 2px; padding-bottom: 2px; border: 1px solid #a0a0a0; border-right-width: 2px; border-bottom: 0; border-radius: 4px 4px 0 0; background: linear-gradient(#fff, #ededed); white-space: nowrap; }
.doctabs .on { height: 35px; margin: 0 0 -2px -2px; padding-bottom: 6px; background: #fff; color: #0000a0; font-size: 16px; font-weight: 700; }
.bill { flex: none; margin: 1px 3px 0 2px; border: 1px solid #7b9ebd; background: #f0f0f0; }
.billrow { display: flex; }
.billclip { flex: 1; min-width: 0; overflow: hidden; background: #fff; }
.vbar { flex: none; width: 20px; padding: 21px 0 0 9px; background: #f0f0f0; }
.vbar i, .hbar i { display: block; background: #8a8a8a; }
.vbar i { width: 2px; height: 21px; }
.hbar { height: 21px; padding: 10px 0 0 21px; }
.hbar i { width: 21px; height: 2px; }

.grid { width: 100%; table-layout: fixed; border-collapse: separate; border-spacing: 0; }
.grid th, .grid td { height: 22px; padding: 0; border-right: 1px solid #bdbdbd; border-bottom: 1px solid #bdbdbd; font-weight: 400; white-space: nowrap; overflow: hidden; line-height: 20px; }
.grid th { background: #e4ebf3; border-color: #808080; }
.grid .low th { height: 23px; }
.grid td { padding: 0 3px; }
.grid th.cur { background: #ffecdc; }
.grid tbody tr:nth-child(even) td { height: 23px; }
.grid .c { padding: 0; text-align: center; }
.grid .r { text-align: right; }
.grid .r, .grid .k { font-family: "Liberation Mono", monospace; font-size: 13px; }
.grid .no { color: #008000; }
.grid td.gut { padding: 0; vertical-align: top; border: 0; background: #e4ebf3; }
.grid .pink { background: #fff2f9; }
.grid .cyan { background: #e2ffff; }
.grid .sel { color: #0000ff; }
.grid .total { color: #ff0030; }
.grid .active { border: 2px solid #000; background: #b4c9ea; }
.grid tbody tr.cut td { height: 8px; border-bottom: 0; line-height: 0; }
.w30 { width: 30px; } .w50 { width: 50px; } .w52 { width: 52px; } .w57 { width: 57px; }
.w68 { width: 68px; } .w73 { width: 73px; } .w75 { width: 75px; } .w84 { width: 84px; }
.w89 { width: 89px; } .w90 { width: 90px; } .w94 { width: 94px; } .w95 { width: 95px; }
.w103 { width: 103px; } .w127 { width: 127px; } .w148 { width: 148px; } .w211 { width: 211px; }
.w232 { width: 232px; } .w260 { width: 260px; } .w348 { width: 348px; }

.hgrip { flex: none; height: 13px; padding: 2px 0 1px 563px; background: #f0f0f0; border-bottom: 1px solid #a0a0a0; }
.hgrip div { display: flex; align-items: center; gap: 4px; width: 482px; height: 10px; padding: 0 6px; border: 1px solid #999; background: #f8f8f8; }
.hgrip svg, .midgrip svg { width: 8px; height: 8px; }
.hgrip b { flex: 1; border-top: 1px dotted #0078d0; }

/* lower half */
.lower { flex: 1; min-height: 0; display: flex; }
.calc { flex: 1; min-width: 0; display: flex; flex-direction: column; }
.tpl { flex: none; display: flex; align-items: center; height: 30px; padding-left: 6px; border: 1px solid #a0a0a0; border-width: 0 2px 1px 0; background: #e4ebf7; }
.tpl label { width: 72px; }
.tplpick { position: relative; width: 424px; margin-right: 7px; }
.tplpick select { width: 100%; height: 23px; padding-left: 3px; border: 1px solid #d0d0d0; border-radius: 2px; background: #fff; appearance: none; }
.tplpick svg { position: absolute; right: 5px; top: 8px; width: 12px; height: 8px; pointer-events: none; }
.calcbox { flex: 1; min-height: 0; display: flex; justify-content: space-between; overflow: hidden; margin: 1px 2px 2px 3px; border: 1px solid #7b9ebd; background: #fff; }
.fee { width: 841px; flex: none; align-self: flex-start; }
.fee th, .fee td.gut { background: #efefef; }
.fee .tight { padding-right: 2px; }
.fee .rose { background: #ffeeff; }
.fee .g { background: #eee; }
.fee .focus { border: 1px dotted #333; background: #b4c9ea; color: #000; }
.fee tbody tr.tall td { height: 24px; }
.fee tbody tr:nth-child(14) td { height: 22px; }
.clip { display: flex; justify-content: center; overflow: hidden; margin: 0 2px; }
.clip span { flex: none; }
.subtabs { flex: none; display: flex; align-items: flex-start; gap: 2px; height: 37px; border-top: 1px solid #a8a8a8; background: #e4ebf7; }
.subtabs button { width: 76px; height: 31px; padding-bottom: 2px; border: 1px solid #a0a0a0; border-top: 0; border-right-width: 2px; border-radius: 0 0 4px 4px; background: #fff; }
.subtabs .on { width: 80px; height: 33px; margin-right: -2px; background: #f0f0f0; color: #0000a0; font-size: 16px; font-weight: 700; }
.midgrip { flex: none; width: 11px; padding-top: 158px; background: #f0f0f0; border-right: 1px solid #b8b8b8; }
.midgrip div { display: flex; flex-direction: column; align-items: center; gap: 4px; width: 10px; height: 136px; padding: 6px 0; border: 1px solid #999; background: #f8f8f8; }
.midgrip b { flex: 1; border-left: 1px dotted #0078d0; }
.coef { flex: none; width: 562px; display: flex; flex-direction: column; }
.coeftabs { height: 26px; padding-top: 1px; }
.coeftabs button { width: 79px; height: 25px; background: #f9f9f9; }
.coefpane { flex: 1; display: flex; align-items: flex-start; gap: 7px; margin-right: 5px; border: 5px solid #f9f9f9; border-top-width: 12px; border-bottom-width: 10px; background: #fff; }
.coefpane table { width: 482px; table-layout: fixed; border-collapse: collapse; }
.coefpane th, .coefpane td { height: 31px; padding: 0 3px; border: 1px solid #999; font-weight: 400; }
.coefpane .opthead { padding-right: 90px; }
.coefpane tr:nth-child(2n) td { height: 32px; }
.coefpane td input[type=text] { display: block; width: 100%; height: 25px; border: 1px solid #e8e8e8; border-bottom: 2px solid #909090; border-radius: 2px; background: #fff; }
.opt label { display: flex; align-items: center; gap: 4px; }
.opt input { appearance: none; display: grid; place-items: center; flex: none; width: 16px; height: 16px; border: 1px solid #777; border-radius: 3px; background: #f4f4f4; }
.opt input:checked { border-color: #0060bc; background: #0060bc; }
.opt input:checked::before { content: ""; width: 8px; height: 4px; border: solid #fff; border-width: 0 0 1px 1px; rotate: -45deg; margin-top: -3px; }
.run { width: 32px; height: 150px; margin-top: 30px; border: 1px solid #d0d0d0; background: #e1e1e1; font: 16px/24px "Noto Sans CJK SC", sans-serif; }
.run svg { width: 20px; height: 20px; margin: 0 auto 3px; }
.status { flex: none; height: 13px; border-top: 1px solid #a0a0a0; background: #f0f0f0; }
```
